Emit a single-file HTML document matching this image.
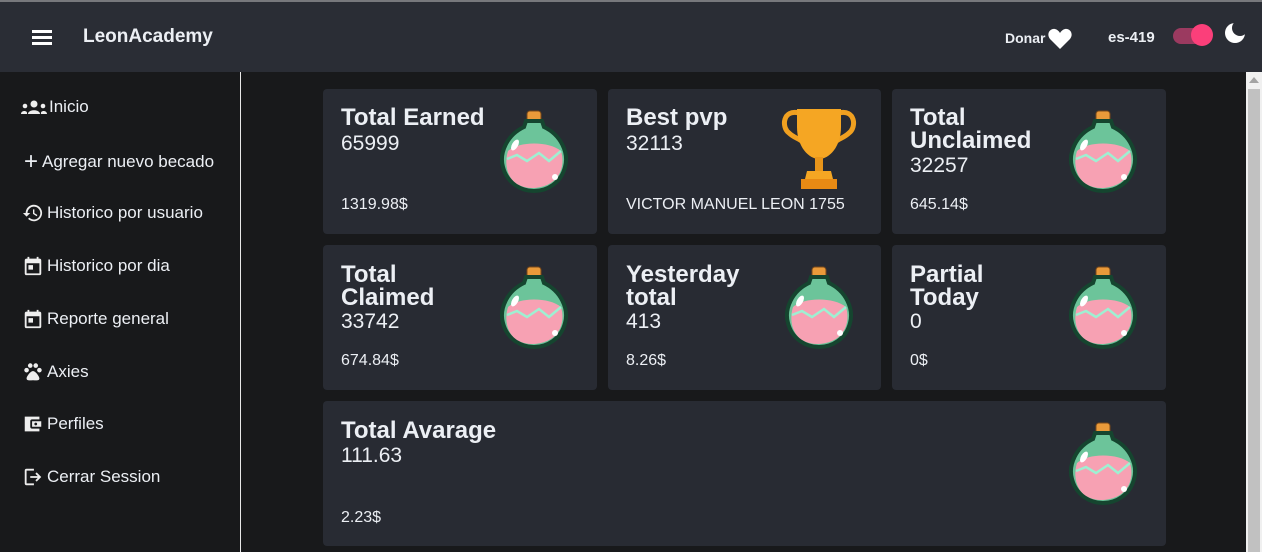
<!DOCTYPE html>
<html><head><meta charset="utf-8"><style>
*{margin:0;padding:0;box-sizing:border-box}
body{width:1262px;height:552px;overflow:hidden;background:#18191b;font-family:"Liberation Sans",sans-serif;color:#eceff4;position:relative}
.top{position:absolute;left:0;top:0;width:1262px;height:72px;background:#2a2d35;border-top:2px solid #77787c}
.side{position:absolute;left:0;top:72px;width:241px;height:480px;background:#18191b;border-right:1px solid #e8e8e8}
.nav{position:absolute;left:21px;font-size:17px;display:flex;align-items:center;gap:2px}
.card{position:absolute;background:#282b33;border-radius:4px}
.t{position:absolute;left:18px;font-size:24px;font-weight:bold;line-height:23px}
.v{position:absolute;left:18px;font-size:21px}
.s{position:absolute;left:18px;font-size:16px}
.ic{position:absolute}
.sb{position:absolute;left:1246px;top:72px;width:16px;height:480px;background:#f0f0f0}
</style></head><body>
<div class="top">
 <div style="position:absolute;left:32px;top:28px;width:20px;height:3px;background:#fff;box-shadow:0 6px 0 #fff,0 12px 0 #fff"></div>
 <div style="position:absolute;left:83px;top:24px;font-size:19px;font-weight:bold">LeonAcademy</div>
 <div style="position:absolute;left:1005px;top:28px;font-size:14px;font-weight:bold">Donar</div>
 <svg style="position:absolute;left:1048px;top:26px" width="24" height="22" viewBox="0 0 24 22"><path d="M12 21 L2 11 C-2 6 2 0 7 1 C9 1.5 11 3 12 5 C13 3 15 1.5 17 1 C22 0 26 6 22 11 Z" fill="#fff"/></svg>
 <div style="position:absolute;left:1108px;top:27px;font-size:15px;font-weight:bold">es-419</div>
 <div style="position:absolute;left:1173px;top:26px;width:36px;height:16px;border-radius:8px;background:#9b3a60"></div>
 <div style="position:absolute;left:1191px;top:22px;width:22px;height:22px;border-radius:50%;background:#fb3f7a"></div>
 <svg style="position:absolute;left:1224px;top:20px" width="22" height="22" viewBox="0 0 22 22"><circle cx="11" cy="11" r="10" fill="#fff"/><circle cx="16" cy="6" r="8" fill="#2a2d35"/></svg>
</div>
<div class="side">
 <div class="nav" style="top:25px"><svg width="26" height="16" viewBox="0 0 26 16"><circle cx="13" cy="5" r="3.5" fill="#eee"/><path d="M7 15 C7 10 19 10 19 15Z" fill="#eee"/><circle cx="4" cy="7" r="2.3" fill="#eee"/><circle cx="22" cy="7" r="2.3" fill="#eee"/><path d="M0 15 C0 11 7 11 6 15Z M26 15 C26 11 19 11 20 15Z" fill="#eee"/></svg>Inicio</div>
 <div class="nav" style="top:76px;left:24px"><span style="font-size:24px;font-weight:300;margin-right:2px">+</span>Agregar nuevo becado</div>
 <div class="nav" style="top:130px"><svg width="24" height="22" viewBox="0 0 24 24"><path d="M13 3a9 9 0 0 0-9 9H1l4 4 4-4H6a7 7 0 1 1 2 5l-1.4 1.4A9 9 0 1 0 13 3zm-1 5v5l4 2.5.8-1.3-3.3-2V8z" fill="#eee"/></svg>Historico por usuario</div>
 <div class="nav" style="top:183px"><svg width="24" height="22" viewBox="0 0 24 24"><path d="M19 4h-1V2h-2v2H8V2H6v2H5a2 2 0 0 0-2 2v14a2 2 0 0 0 2 2h14a2 2 0 0 0 2-2V6a2 2 0 0 0-2-2zm0 16H5V9h14zM7 11h5v5H7z" fill="#eee"/></svg>Historico por dia</div>
 <div class="nav" style="top:236px"><svg width="24" height="22" viewBox="0 0 24 24"><path d="M19 4h-1V2h-2v2H8V2H6v2H5a2 2 0 0 0-2 2v14a2 2 0 0 0 2 2h14a2 2 0 0 0 2-2V6a2 2 0 0 0-2-2zm0 16H5V9h14zM7 11h5v5H7z" fill="#eee"/></svg>Reporte general</div>
 <div class="nav" style="top:289px"><svg width="24" height="22" viewBox="0 0 24 24"><circle cx="5" cy="10" r="2.5" fill="#eee"/><circle cx="9" cy="5" r="2.5" fill="#eee"/><circle cx="15" cy="5" r="2.5" fill="#eee"/><circle cx="19" cy="10" r="2.5" fill="#eee"/><path d="M12 11c-3 0-7 6-7 8 0 3 4 2 7 2s7 1 7-2c0-2-4-8-7-8z" fill="#eee"/></svg>Axies</div>
 <div class="nav" style="top:341px"><svg width="24" height="22" viewBox="0 0 24 24"><path d="M3 4h16v3h-8a2 2 0 0 0-2 2v6a2 2 0 0 0 2 2h8v3H3z M11 9h10v6H11z" fill="#eee"/><circle cx="15" cy="12" r="1.5" fill="#18191b"/></svg>Perfiles</div>
 <div class="nav" style="top:394px"><svg width="24" height="22" viewBox="0 0 24 24"><path d="M5 3h8v2H5v14h8v2H5a2 2 0 0 1-2-2V5a2 2 0 0 1 2-2zm11 4 5 5-5 5-1.4-1.4 2.6-2.6H9v-2h8.2l-2.6-2.6z" fill="#eee"/></svg>Cerrar Session</div>
</div>
<svg width="0" height="0" style="position:absolute"><defs><g id="p"><rect x="28" y="2" width="14" height="12" rx="3" fill="#e99a3a" stroke="#7a4a1a" stroke-width="1"/><path d="M27 12 L43 12 L45 18 C62 26 70 44 66 58 C62 74 48 82 35 82 C22 82 8 74 4 58 C0 44 8 26 25 18Z" fill="#6cc49a" stroke="#15452f" stroke-width="4"/><path d="M9 42 C20 32 50 32 62 42 C66 55 62 70 48 76 C38 80 28 80 20 76 C8 70 5 55 9 42Z" fill="#f7a1b3"/><path d="M8 50 L18 46 L28 52 L40 44 L50 52 L62 42" fill="none" stroke="#9ef0d2" stroke-width="2.5"/><ellipse cx="16" cy="36" rx="3" ry="6" fill="#fff" transform="rotate(30 16 36)"/><circle cx="56" cy="68" r="3" fill="#fff"/></g></defs></svg>
<div class="card" style="left:323px;top:89px;width:274px;height:145px"><div class="t" style="top:17px">Total Earned</div><div class="v" style="top:43px">65999</div><div class="s" style="top:107px">1319.98$</div><svg class="ic" style="left:176px;top:20px" width="72" height="84" viewBox="0 0 72 84"><use href="#p"/></svg></div>
<div class="card" style="left:608px;top:89px;width:273px;height:145px"><div class="t" style="top:17px">Best pvp</div><div class="v" style="top:43px">32113</div><div class="s" style="top:107px">VICTOR MANUEL LEON 1755</div>
<svg class="ic" style="left:171px;top:18px" width="80" height="84" viewBox="0 0 80 84"><path d="M20 6 C4 2 2 20 10 26 C16 32 24 32 28 40" fill="none" stroke="#f0a020" stroke-width="5"/><path d="M60 6 C76 2 78 20 70 26 C64 32 56 32 52 40" fill="none" stroke="#f0a020" stroke-width="5"/><path d="M18 2 H62 V20 C62 40 50 52 40 52 C30 52 18 40 18 20Z" fill="#f5a623"/><rect x="36" y="50" width="8" height="14" fill="#e8951a"/><path d="M28 64 H52 L54 72 H26Z" fill="#f5a623"/><rect x="22" y="72" width="36" height="10" fill="#e88a14"/></svg></div>
<div class="card" style="left:892px;top:89px;width:274px;height:145px"><div class="t" style="top:17px">Total<br>Unclaimed</div><div class="v" style="top:65px">32257</div><div class="s" style="top:107px">645.14$</div><svg class="ic" style="left:176px;top:20px" width="72" height="84" viewBox="0 0 72 84"><use href="#p"/></svg></div>
<div class="card" style="left:323px;top:245px;width:274px;height:145px"><div class="t" style="top:18px">Total<br>Claimed</div><div class="v" style="top:65px">33742</div><div class="s" style="top:107px">674.84$</div><svg class="ic" style="left:176px;top:20px" width="72" height="84" viewBox="0 0 72 84"><use href="#p"/></svg></div>
<div class="card" style="left:608px;top:245px;width:273px;height:145px"><div class="t" style="top:18px">Yesterday<br>total</div><div class="v" style="top:65px">413</div><div class="s" style="top:107px">8.26$</div><svg class="ic" style="left:176px;top:20px" width="72" height="84" viewBox="0 0 72 84"><use href="#p"/></svg></div>
<div class="card" style="left:892px;top:245px;width:274px;height:145px"><div class="t" style="top:18px">Partial<br>Today</div><div class="v" style="top:65px">0</div><div class="s" style="top:107px">0$</div><svg class="ic" style="left:176px;top:20px" width="72" height="84" viewBox="0 0 72 84"><use href="#p"/></svg></div>
<div class="card" style="left:323px;top:401px;width:843px;height:145px"><div class="t" style="top:18px">Total Avarage</div><div class="v" style="top:43px">111.63</div><div class="s" style="top:108px">2.23$</div><svg class="ic" style="left:745px;top:20px" width="72" height="84" viewBox="0 0 72 84"><use href="#p"/></svg></div>
<div class="sb"><div style="position:absolute;left:3px;top:5px;border:5px solid transparent;border-bottom:6px solid #a3a3a3;border-top:0"></div><div style="position:absolute;left:2px;top:17px;width:12px;height:463px;background:#c1c1c1"></div></div>
</body></html>
